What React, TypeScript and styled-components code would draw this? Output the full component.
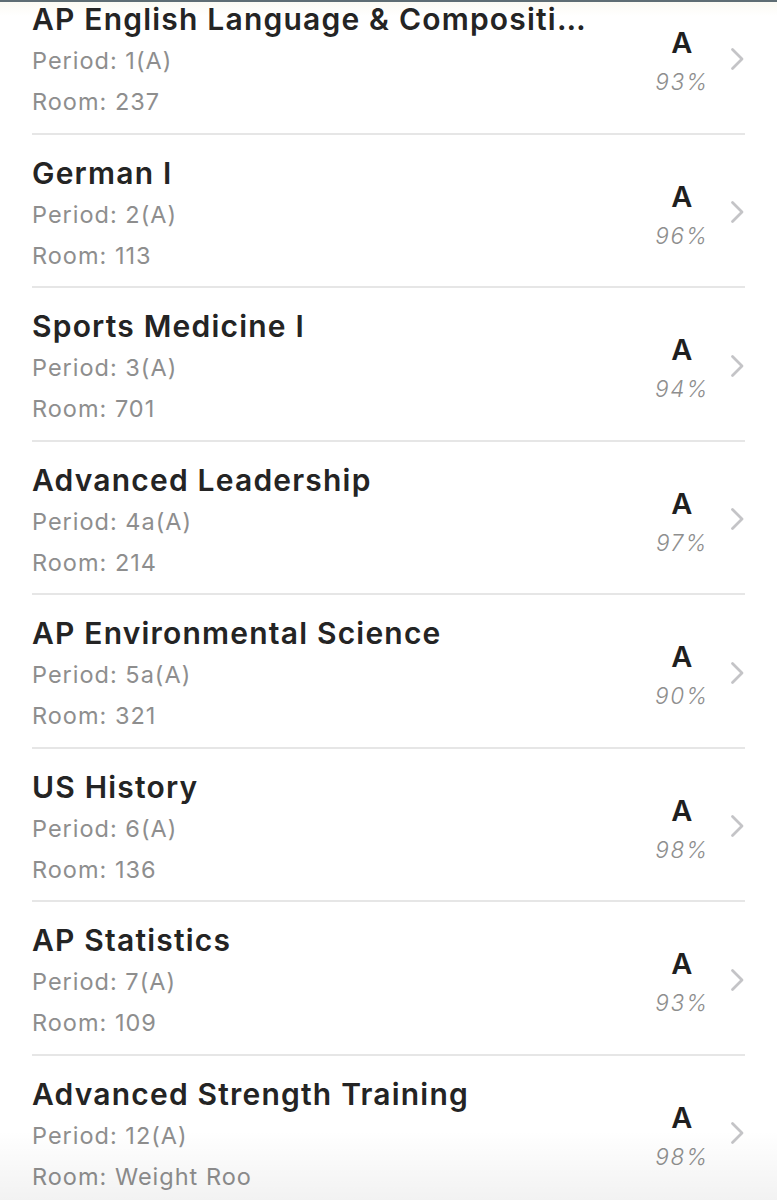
import React from 'react';
import styled, { createGlobalStyle } from 'styled-components';

type Course = {
  name: string;
  period: string;
  room: string;
  grade: string;
  percent: number;
};

const courses: Course[] = [
  { name: 'AP English Language & Composition', period: '1(A)', room: '237', grade: 'A', percent: 93 },
  { name: 'German I', period: '2(A)', room: '113', grade: 'A', percent: 96 },
  { name: 'Sports Medicine I', period: '3(A)', room: '701', grade: 'A', percent: 94 },
  { name: 'Advanced Leadership', period: '4a(A)', room: '214', grade: 'A', percent: 97 },
  { name: 'AP Environmental Science', period: '5a(A)', room: '321', grade: 'A', percent: 90 },
  { name: 'US History', period: '6(A)', room: '136', grade: 'A', percent: 98 },
  { name: 'AP Statistics', period: '7(A)', room: '109', grade: 'A', percent: 93 },
  { name: 'Advanced Strength Training', period: '12(A)', room: 'Weight Roo', grade: 'A', percent: 98 },
];

const Chevron = () => (
  <ChevronIcon width="15" height="24" viewBox="0 0 15 24" fill="none">
    <path d="M2.5 2.5 L12 12 L2.5 21.5" stroke="#c4c4c7" strokeWidth="2.8" strokeLinecap="round" strokeLinejoin="round" />
  </ChevronIcon>
);

const App = () => (
  <Page>
    <GlobalStyle />
    <List>
      {courses.map((c) => (
        <Row key={c.name}>
          <Info>
            <Title>{c.name}</Title>
            <Detail>Period: {c.period}</Detail>
            <Detail>Room: {c.room}</Detail>
          </Info>
          <GradeBox>
            <Grade>{c.grade}</Grade>
            <Percent>{c.percent}%</Percent>
          </GradeBox>
          <Chevron />
        </Row>
      ))}
    </List>
    <BottomShade />
  </Page>
);

export default App;

const GlobalStyle = createGlobalStyle`
  html, body {
    margin: 0;
    padding: 0;
    background: #ffffff;
  }
  body {
    font-family: Inter, "Liberation Sans", sans-serif;
    -webkit-font-smoothing: antialiased;
  }
`;

const Page = styled.div`
  position: relative;
  height: 1200px;
  overflow: hidden;
  box-sizing: border-box;
  border-top: 2px solid #5e6d74;
  background: linear-gradient(to bottom, #fbfaf3 0px, #ffffff 14px);
`;

const List = styled.div`
  display: flex;
  flex-direction: column;
  margin: -21px 32px 0 32px;
`;

const Row = styled.div`
  display: flex;
  align-items: flex-start;
  box-sizing: border-box;
  height: 153.5px;
  border-bottom: 2px solid #e6e6e6;
`;

const Info = styled.div`
  flex: 1;
  min-width: 0;
  display: flex;
  flex-direction: column;
  padding-top: 18px;
  margin-right: 56px;
`;

const Title = styled.div`
  font-size: 30px;
  font-weight: 600;
  line-height: 41px;
  color: #242424;
  white-space: nowrap;
  overflow: hidden;
  text-overflow: ellipsis;
  letter-spacing: 1.2px;
`;

const Detail = styled.div`
  font-size: 23.5px;
  font-weight: 400;
  line-height: 41px;
  color: #8e8e8e;
  white-space: nowrap;
  letter-spacing: 1px;
`;

const GradeBox = styled.div`
  width: 70px;
  display: flex;
  flex-direction: column;
  align-items: center;
  padding-top: 46px;
`;

const Grade = styled.div`
  font-size: 29px;
  font-weight: 600;
  line-height: 32px;
  color: #1f1f1f;
  letter-spacing: 0.5px;
`;

const Percent = styled.div`
  margin-top: 8px;
  font-size: 22.5px;
  font-style: italic;
  font-weight: 300;
  line-height: 30px;
  color: #8e8e8e;
  letter-spacing: 1.8px;
`;

const ChevronIcon = styled.svg`
  flex: none;
  align-self: center;
  margin-left: 13px;
  margin-top: 4px;
`;

const BottomShade = styled.div`
  position: absolute;
  left: 0;
  right: 0;
  bottom: 0;
  height: 70px;
  pointer-events: none;
  background: linear-gradient(to bottom, rgba(0, 0, 0, 0), rgba(0, 0, 0, 0.05));
`;
